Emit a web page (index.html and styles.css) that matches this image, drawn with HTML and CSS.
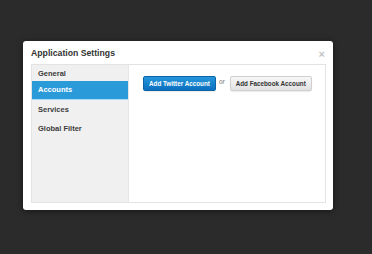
FILE: index.html
```html
<!DOCTYPE html>
<html lang="en">
<head>
    <meta charset="UTF-8">
    <title>Application Settings</title>
    <link rel="stylesheet" href="styles.css">
</head>
<body>

    <!-- Settings Modal -->
    <div class="modal">
        <div class="modal-header">
            <h3>Application Settings</h3>
            <span class="close-btn">&times;</span>
        </div>
        <div class="modal-body">
            <ul class="side-nav">
                <li class="nav-item">General</li>
                <li class="nav-item active">Accounts</li>
                <li class="nav-item">Services</li>
                <li class="nav-item">Global Filter</li>
            </ul>
            <div class="pane">
                <button class="btn btn-primary">Add Twitter Account</button>
                <span class="or">or</span>
                <button class="btn">Add Facebook Account</button>
            </div>
        </div>
    </div>

</body>
</html>
```

FILE: styles.css
```css
body {
    margin: 0;
    width: 372px;
    height: 254px;
    background-color: #2b2b2b;
    font-family: "Liberation Sans", Arial, sans-serif;
    color: #333;
    overflow: hidden;
}

/* Modal Window */
.modal {
    margin: 41px 0 0 23px;
    width: 310px;
    height: 169px;
    background-color: #fff;
    border-radius: 3px;
    box-shadow: 0 1px 6px rgba(0, 0, 0, 0.5);
    display: flex;
    flex-direction: column;
    box-sizing: border-box;
    padding: 0 7px 7px 8px;
}

/* Modal Header */
.modal-header {
    height: 23px;
    display: flex;
    align-items: center;
    justify-content: space-between;
}

.modal-header h3 {
    margin: 1px 0 0 0;
    font-size: 8.7px;
    font-weight: bold;
    color: #333;
}

.close-btn {
    color: #c4c4c4;
    font-size: 11px;
    font-weight: bold;
    margin: 2px 1px 0 0;
}

/* Modal Body */
.modal-body {
    flex: 1;
    display: flex;
    border: 1px solid #e3e3e3;
}

/* Side Navigation */
.side-nav {
    list-style: none;
    margin: 0;
    padding: 0;
    width: 96px;
    background-color: #f0f0f0;
    border-right: 1px solid #e6e6e6;
}

.nav-item {
    height: 19px;
    line-height: 19px;
    padding-left: 6px;
    font-size: 7.5px;
    font-weight: bold;
    color: #3a3a3a;
}

.nav-item:first-child {
    height: 16px;
    line-height: 17px;
}

.nav-item.active {
    background-color: #2b9ad8;
    color: #fff;
    border-bottom: 1px solid #a9dcf5;
    height: 18px;
    line-height: 18px;
}

/* Content Pane */
.pane {
    flex: 1;
    display: flex;
    align-items: flex-start;
    padding: 11px 0 0 14px;
}

/* Buttons */
.btn {
    height: 15px;
    padding: 0 5px;
    white-space: nowrap;
    font-family: "Liberation Sans", Arial, sans-serif;
    font-size: 6.3px;
    font-weight: bold;
    color: #333;
    background: linear-gradient(#f7f7f7, #e2e2e2);
    border: 1px solid #d0d0d0;
    border-radius: 2px;
    box-shadow: 0 1px 1px rgba(0, 0, 0, 0.08);
}

.btn-primary {
    color: #fff;
    background: linear-gradient(#2597db, #0a6fbf);
    border-color: #0b64a8;
}

.or {
    margin: 2px 5px 0 3px;
    font-size: 6.5px;
    font-style: italic;
    color: #777;
}
```
